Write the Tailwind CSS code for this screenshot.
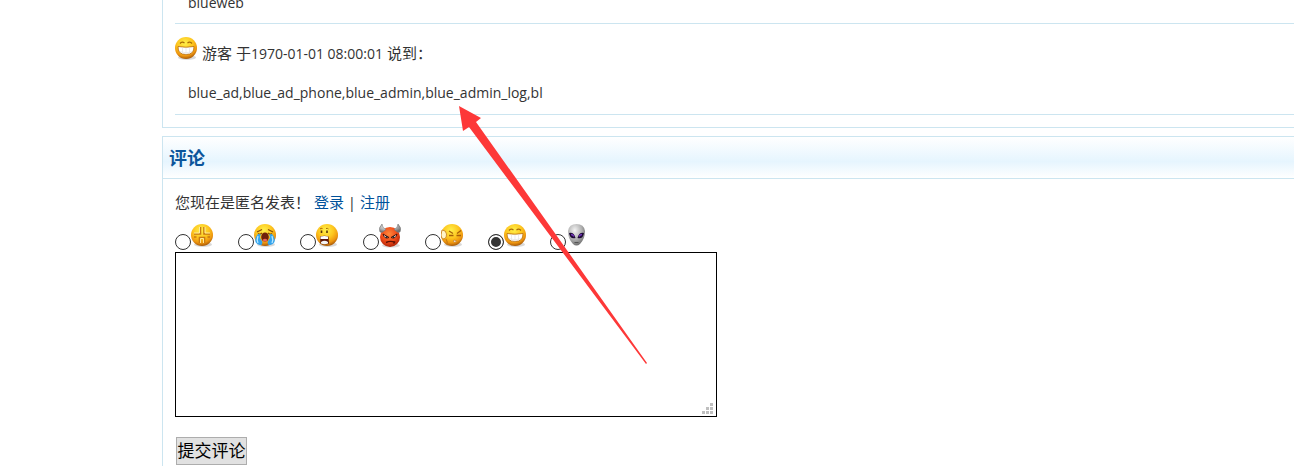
<!DOCTYPE html>
<html lang="zh-CN">

<head>
    <meta charset="UTF-8">
    <meta name="viewport" content="width=device-width, initial-scale=1.0">
    <title>评论</title>
    <script src="https://cdn.jsdelivr.net/npm/@tailwindcss/browser@4"></script>
</head>

<body class="relative h-screen overflow-hidden bg-white font-['Open_Sans','Noto_Sans_CJK_SC',sans-serif] text-[15px] leading-5 text-[#333]">

    <!-- face icons -->
    <svg class="absolute size-0" aria-hidden="true">
        <defs>
            <radialGradient id="gold" cx="45%" cy="28%" r="72%">
                <stop offset="0" stop-color="#fff04a" />
                <stop offset=".5" stop-color="#fdc51e" />
                <stop offset=".8" stop-color="#ee9610" />
                <stop offset="1" stop-color="#a85a08" />
            </radialGradient>
            <radialGradient id="red" cx="45%" cy="35%" r="65%">
                <stop offset="0" stop-color="#ff8a3c" />
                <stop offset=".6" stop-color="#f04a18" />
                <stop offset="1" stop-color="#b02408" />
            </radialGradient>
            <radialGradient id="grey" cx="40%" cy="30%" r="70%">
                <stop offset="0" stop-color="#f4f4f4" />
                <stop offset=".6" stop-color="#b0b0b0" />
                <stop offset="1" stop-color="#707070" />
            </radialGradient>
        </defs>
        <symbol id="grin" viewBox="0 0 24 24">
            <ellipse cx="12" cy="20.5" rx="9" ry="2.5" fill="#000" opacity=".15" />
            <circle cx="11" cy="11" r="11" fill="url(#gold)" />
            <path d="M5 6.500q2.200-2.600 4.500-.4M12.500 6.100q2.300-2.200 4.500.4" fill="none" stroke="#a86b05" stroke-width="1.3" />
            <path d="M3 9.500q8 1.500 16 0q.3 8-8 8t-8-8z" fill="#fff" stroke="#b5680a" stroke-width=".8" />
            <path d="M4.500 14.500q6.500 2.500 13 0M7.500 10.500v6M11 10.500v7M14.500 10.500v6" fill="none" stroke="#ddd" stroke-width=".6" />
        </symbol>
        <symbol id="vein" viewBox="0 0 24 24">
            <ellipse cx="12" cy="20.5" rx="9" ry="2.5" fill="#000" opacity=".15" />
            <circle cx="11" cy="11" r="11" fill="url(#gold)" />
            <path d="M9.500 3v7H3M13 3v7H19M8.500 19v-5.500h5V19M3 13h2.500M16.500 13h2.500" fill="none" stroke="#c87a12" stroke-width="1.6" />
            <path d="M8.500 3v6H3M14 3v6h5M9.500 19v-4.500h3v4.500" fill="none" stroke="#fff0a8" stroke-width=".9" />
        </symbol>
        <symbol id="cry" viewBox="0 0 24 24">
            <ellipse cx="12" cy="20.5" rx="9" ry="2.5" fill="#000" opacity=".15" />
            <circle cx="11" cy="11" r="11" fill="url(#gold)" />
            <path d="M3 8l5-2.500M19 8l-5-2.500M4 9.500q2 1.500 4-.5M18 9.500q-2 1.500-4-.5" fill="none" stroke="#8a4b05" stroke-width="1.2" />
            <path d="M4 10q-3.500 4-2.500 8q2.500 4.500 6.500 2.500q1-3-1-5t0-5z" fill="#35a5ee" />
            <path d="M18 10q3.500 4 2.500 8q-2.500 4.500-6.500 2.500q-1-3 1-5t0-5z" fill="#35a5ee" />
            <path d="M4 12q-1.500 4 0 7M18 12q1.500 4 0 7" fill="none" stroke="#b8e8ff" stroke-width="1.3" />
            <ellipse cx="11" cy="13" rx="3.8" ry="4.5" fill="#70200c" />
            <path d="M8.500 16q2.500-2.500 5 0q-2.500 3-5 0z" fill="#f0645a" />
        </symbol>
        <symbol id="shout" viewBox="0 0 24 24">
            <ellipse cx="12" cy="20.5" rx="9" ry="2.5" fill="#000" opacity=".15" />
            <circle cx="11" cy="11" r="11" fill="url(#gold)" />
            <path d="M5.500 6.500v2.500M11 6.500v2.500" stroke="#5a3506" stroke-width="1.6" />
            <path d="M4 5q1-1 2.500-.5M10 4.500q1.500-.5 2.500.5" fill="none" stroke="#a86b05" />
            <path d="M4 12.500q4.500-1.500 8.500 0l.5 7q-4.500 2-8.500 0z" fill="#5c1608" />
            <path d="M4.500 12.500q4-1.200 7.500 0v2.500H4.500z" fill="#fff" />
            <path d="M5 18q3.500-2.500 7 0v1.500q-3.500 1.500-7 0z" fill="#f4f4f4" />
        </symbol>
        <symbol id="devil" viewBox="0 0 24 24">
            <ellipse cx="12" cy="21.5" rx="9" ry="2" fill="#000" opacity=".15" />
            <circle cx="11" cy="13" r="10" fill="url(#red)" />
            <path d="M3 0Q-1 4 1 8q2 1.500 6-2.500Q3 4 3 0zM19 0q4 4 2 8q-2 1.500-6-2.500Q19 4 19 0z" fill="url(#grey)" stroke="#777" stroke-width=".6" />
            <path d="M4 10l6 3.500q-4.500 2-6-3.500zM18 10l-6 3.500q4.500 2 6-3.500z" fill="#fff" stroke="#4a1005" stroke-width="1" />
            <circle cx="7.5" cy="13" r="1" fill="#222" />
            <circle cx="14.5" cy="13" r="1" fill="#222" />
            <path d="M7 18.500q4-2 8.500-.5l-1 1.500" fill="none" stroke="#5a1005" stroke-width="1.4" />
        </symbol>
        <symbol id="annoyed" viewBox="0 0 24 24">
            <ellipse cx="12" cy="20.5" rx="9" ry="2.5" fill="#000" opacity=".15" />
            <circle cx="11" cy="11" r="11" fill="url(#gold)" />
            <path d="M1 6q4 0 4.500 4t-2.500 5q-3 0-3-4z" fill="#fff4c8" stroke="#c47a10" stroke-width=".8" />
            <path d="M8 7l4 2.500M8 11.500h4.500M20 6.500l-4 3M15.500 11.500H20" stroke="#a85f08" stroke-width="1.3" />
            <path d="M12 17q1.500-1.500 3.500 0q-1.500 2.500-3.500 0z" fill="#fff" stroke="#b5680a" stroke-width=".6" />
            <path d="M5 15q2 3 1 6" fill="none" stroke="#c87a10" stroke-width="1.2" />
        </symbol>
        <symbol id="alien" viewBox="0 0 24 24">
            <path d="M10.500 0Q18 0 19 7q0 8-5 13q-3.500 3-7 0Q2 15 2 7Q3 0 10.500 0z" fill="url(#grey)" />
            <path d="M3 9q5-1 6.500 5Q4 15.500 3 9zM18 9q-5-1-6.500 5q5.500 1.500 6.500-5z" fill="#1c0a33" />
            <path d="M5 10.500q2 0 3 2M16 10.500q-2 0-3 2" fill="none" stroke="#7134b8" stroke-width="1.5" />
            <path d="M8.500 18.500h4" stroke="#555" />
        </symbol>
    </svg>

    <main class="ml-[162px]">

        <!-- comment list -->
        <section class="-mt-[7px] border-b border-l border-[#cce5f0] pb-3 pl-3">
            <article class="border-b border-[#cce5f0] pb-[10px]">
                <p class="pl-[13px] text-sm leading-5">blueweb</p>
            </article>
            <article class="border-b border-[#cce5f0] pt-3 pb-[11px]">
                <header class="flex gap-[3px]">
                    <svg class="mt-px size-6" role="img" aria-label="呲牙"><use href="#grin" /></svg>
                    <p class="pt-[7px]">游客 于<span class="text-sm">1970-01-01 08:00:01</span> 说到：</p>
                </header>
                <p class="mt-[19px] pl-[13px] text-sm leading-5">blue_ad,blue_ad_phone,blue_admin,blue_admin_log,bl</p>
            </article>
        </section>

        <!-- comment form -->
        <section class="mt-2 border-t border-l border-[#cce5f0]">
            <h2 class="border-b border-[#cce5f0] bg-linear-to-b from-white via-[#e6f5fe] via-60% to-white px-[6px] pt-[9px] pb-2 text-lg leading-6 font-bold text-[#0b559b]">评论</h2>
            <form class="px-3 pt-[13px] pb-1">
                <p>您现在是匿名发表！ <a href="#" class="text-[#00529b]">登录</a> | <a href="#" class="text-[#00529b]">注册</a></p>
                <div class="mt-3 grid w-[438px] grid-cols-7">
                    <label class="flex items-start"><input type="radio" name="face" aria-label="抓狂" class="mt-[10px] size-4 appearance-none rounded-full border border-[#333] bg-white"><svg class="size-6"><use href="#vein" /></svg></label>
                    <label class="flex items-start"><input type="radio" name="face" aria-label="大哭" class="mt-[10px] size-4 appearance-none rounded-full border border-[#333] bg-white"><svg class="size-6"><use href="#cry" /></svg></label>
                    <label class="flex items-start"><input type="radio" name="face" aria-label="惊讶" class="mt-[10px] size-4 appearance-none rounded-full border border-[#333] bg-white"><svg class="size-6"><use href="#shout" /></svg></label>
                    <label class="flex items-start"><input type="radio" name="face" aria-label="恶魔" class="mt-[10px] size-4 appearance-none rounded-full border border-[#333] bg-white"><svg class="size-6"><use href="#devil" /></svg></label>
                    <label class="flex items-start"><input type="radio" name="face" aria-label="郁闷" class="mt-[10px] size-4 appearance-none rounded-full border border-[#333] bg-white"><svg class="size-6"><use href="#annoyed" /></svg></label>
                    <label class="flex items-start"><input type="radio" name="face" aria-label="呲牙" checked class="mt-[10px] size-4 appearance-none rounded-full border border-[#333] bg-[#333] inset-shadow-[0_0_0_2px_#fff]"><svg class="size-6"><use href="#grin" /></svg></label>
                    <label class="flex items-start"><input type="radio" name="face" aria-label="外星人" class="mt-[10px] size-4 appearance-none rounded-full border border-[#333] bg-white"><svg class="size-6"><use href="#alien" /></svg></label>
                </div>
                <div class="relative mt-[2px] w-[542px]">
                    <textarea name="content" aria-label="评论内容" class="block h-[165px] w-full resize-none border border-black bg-white p-1"></textarea>
                    <svg class="absolute right-1 bottom-[3px] h-[11px] w-[11px]" viewBox="0 0 11 11" fill="#bfbfbf">
                        <path d="M8 0h3v3H8zM4 4h3v3H4zM8 4h3v3H8zM0 8h3v3H0zM4 8h3v3H4zM8 8h3v3H8z" />
                    </svg>
                </div>
                <button type="submit" class="mt-5 ml-px h-7 w-[71px] border border-[#adadad] bg-[#e1e1e1] text-[17px] whitespace-nowrap text-black">提交评论</button>
            </form>
        </section>
    </main>

    <!-- red arrow -->
    <svg class="pointer-events-none absolute top-[106px] left-[459px] h-[258px] w-[189px]" viewBox="0 0 189 258" fill="#fd3838">
        <path d="M0 0L22 12L17 16L188 257L187 258L10 21L4 25z" />
    </svg>
</body>

</html>
